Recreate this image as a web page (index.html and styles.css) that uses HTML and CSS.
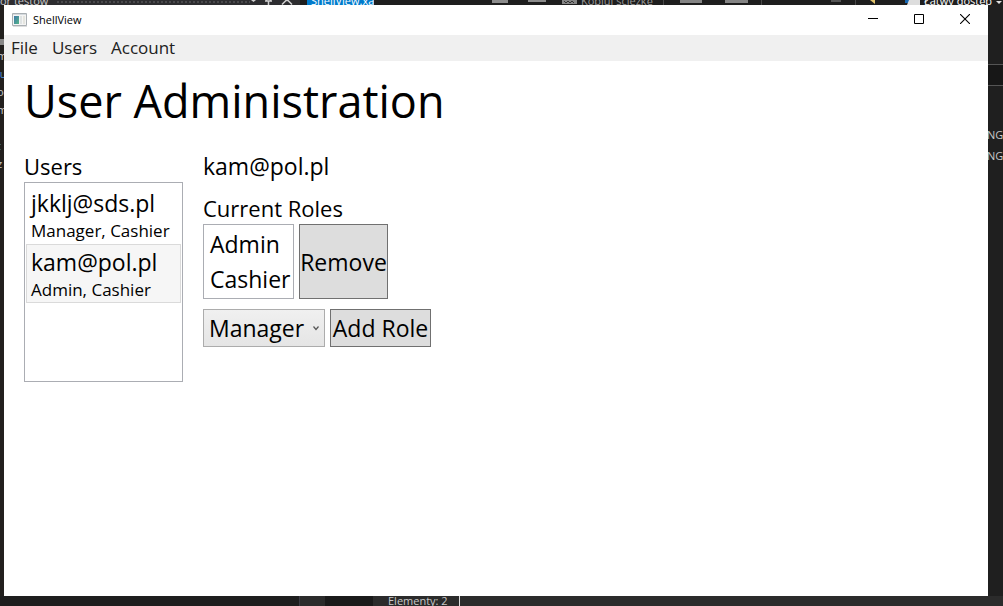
FILE: index.html
```html
<!DOCTYPE html>
<html lang="en">
<head>
<meta charset="utf-8">
<title>ShellView</title>
<link rel="stylesheet" href="styles.css">
</head>
<body class="desktop">
  <div class="strip strip-top" aria-hidden="true">
    <span class="behind behind-search">tor testów</span>
    <span class="dots"></span>
    <svg class="pins" width="50" height="5" viewBox="0 0 50 5"><path d="M1 0h5l-2.500 2z" fill="#d0d0d0"/><path d="M15 1h7M18.500 1v4M16.500 0v1M20.500 0v1M32 4.500l4-4h2l4 4" fill="none" stroke="#d0d0d0" stroke-width="1.500"/></svg>
    <span class="behind behind-tab">ShellView.xa</span>
    <svg class="ribbon" width="175" height="5" viewBox="0 0 175 5"><path d="M118 0h16v3h-16zM154 0h18v2h-18z" fill="#8c8c8c"/></svg>
    <svg class="path-icon" width="18" height="5" viewBox="0 0 18 5"><path d="M0 0h15v4H0z" fill="#858585"/><path d="M2 1l2 2 2-2 2 2 2-2 2 2" fill="none" stroke="#333"/></svg>
    <span class="behind behind-copy">Kopiuj ścieżkę</span>
    <svg class="tools" width="257" height="5" viewBox="0 0 257 5"><path d="M0 0h1v5H0zM98 0h1v5h-1zM192 0h1v5h-1z" fill="#484848"/><path d="M17 0h22v3H17zM62 0h23v3H62z" fill="#858585"/><path d="M168 0h10v2h-10z" fill="#555"/><path d="M207 0h5v4z" fill="#e2c36b"/><path d="M242 0h8v3h-8z" fill="#1768b3"/><path d="M246 0h11v5h-13z" fill="#ddd"/></svg>
    <span class="behind behind-access">Łatwy dostęp</span>
    <svg width="8" height="5" viewBox="0 0 8 5"><path d="M1 1h6L4 4z" fill="#e0e0e0"/></svg>
  </div>
  <div class="strip strip-left" aria-hidden="true">
    <span class="sliver sliver-bar"></span>
    <span class="sliver">m</span>
    <span class="sliver sliver-blue">lu</span>
    <span class="sliver">oc</span>
    <span class="sliver">m</span>
    <span class="sliver"></span>
    <span class="sliver sliver-blue">t</span>
    <span class="sliver">z</span>
  </div>

  <div class="window">
    <header class="titlebar">
      <svg class="app-icon" width="16" height="14" viewBox="0 0 16 14" aria-hidden="true">
        <defs><linearGradient id="pane" x1="0" y1="0" x2="1" y2="1"><stop offset="0" stop-color="#3f78a8"/><stop offset="1" stop-color="#55b58a"/></linearGradient></defs>
        <path d="M.5.500h14v12H.5z" fill="#f4f4f4" stroke="#a9afb3"/>
        <path d="M1 1h13v1H1z" fill="#d5dade"/>
        <path d="M2 3h5v8H2z" fill="url(#pane)"/>
        <path d="M8 3h2v8H8z" fill="#dfe3e3"/>
        <path d="M11 3h2v8h-2z" fill="#e5e5df"/>
        <path d="M1 13.500h14" stroke="#ddd"/>
      </svg>
      <span class="title">ShellView</span>
      <div class="caption-buttons">
        <button class="caption" type="button" aria-label="Minimize"><svg width="10" height="10" viewBox="0 0 10 10"><path d="M0 4.500h10" stroke="#000"/></svg></button>
        <button class="caption" type="button" aria-label="Maximize"><svg width="10" height="10" viewBox="0 0 10 10"><path d="M.5.500h9v9h-9z" fill="none" stroke="#000"/></svg></button>
        <button class="caption" type="button" aria-label="Close"><svg width="10" height="10" viewBox="0 0 10 10"><path d="M0 0l10 10M10 0L0 10" stroke="#000" stroke-width="1.100"/></svg></button>
      </div>
    </header>
    <nav class="menu">
      <button class="menu-item" type="button">File</button>
      <button class="menu-item" type="button">Users</button>
      <button class="menu-item" type="button">Account</button>
    </nav>
    <main class="content">
      <h1 class="heading">User Administration</h1>
      <div class="columns">
        <section class="users">
          <h2 class="label" id="users-label">Users</h2>
          <ul class="listbox user-list" role="listbox" aria-labelledby="users-label">
            <li class="user" role="option" aria-selected="false">
              <span class="email">jkklj@sds.pl</span>
              <span class="user-roles">Manager, Cashier</span>
            </li>
            <li class="user selected" role="option" aria-selected="true">
              <span class="email">kam@pol.pl</span>
              <span class="user-roles">Admin, Cashier</span>
            </li>
          </ul>
        </section>
        <section class="details">
          <p class="label account">kam@pol.pl</p>
          <div class="current">
            <h2 class="label" id="roles-label">Current Roles</h2>
            <div class="row">
              <ul class="listbox role-list" role="listbox" aria-labelledby="roles-label">
                <li class="role" role="option">Admin</li>
                <li class="role" role="option">Cashier</li>
              </ul>
              <button class="button remove" type="button">Remove</button>
            </div>
          </div>
          <div class="row">
            <div class="combo">
              <select class="select" aria-label="Role to add"><option>Manager</option></select>
              <svg class="chevron" width="6" height="5" viewBox="0 0 6 5" aria-hidden="true"><path d="M.5.500L3 3.500 5.500.500" fill="none" stroke="#555" stroke-width="1.200"/></svg>
            </div>
            <button class="button add" type="button">Add Role</button>
          </div>
        </section>
      </div>
    </main>
  </div>

  <div class="strip strip-right" aria-hidden="true">
    <span class="field"></span>
    <span class="code">NG</span>
    <span class="code">NG</span>
  </div>
  <div class="strip strip-bottom" aria-hidden="true">
    <span class="panel"></span>
    <span class="tab"></span>
    <span class="count">Elementy: 2</span>
  </div>
</body>
</html>
```
FILE: styles.css
```css
* { box-sizing: border-box; }

.desktop {
  margin: 0;
  height: 100vh;
  display: grid;
  grid-template: 5px minmax(0, 1fr) 10px / 4px minmax(0, 1fr) 15px;
  overflow: hidden;
  background: #1e1e1e;
  color: #000;
  font-family: "Open Sans", "Noto Sans", sans-serif;
}

.strip {
  display: flex;
  overflow: hidden;
  white-space: nowrap;
  color: #c8c8c8;
  font-size: 11px;
  line-height: 14px;
}

.strip > * { flex: none; }

/* Applications showing behind the window */
.strip-top { grid-column: 1 / -1; }
.behind { height: 14px; margin-top: -6px; }
.behind-search { width: 56px; text-indent: -4px; background: #2d2d30; }
.dots { width: 194px; background: radial-gradient(#4a4a4d 1px, #2d2d30 1px) 0 0 / 4px 4px; }
.pins { background: #2d2d30; }
.behind-tab { width: 67px; margin-left: 7px; padding-left: 4px; background: #007acc; color: #fff; overflow: hidden; }
.path-icon { margin-left: 13px; }
.behind-copy { width: 83px; padding-left: 1px; color: #999; }
.behind-access { width: 75px; padding-left: 4px; color: #fff; }

.strip-left { flex-direction: column; padding-top: 34px; background: #22201e; }
.sliver { height: 18px; margin-left: -3px; }
.sliver-bar { height: 6px; margin-bottom: 4px; background: #888; }
.sliver-blue { color: #4c8fd8; }

.strip-right { flex-direction: column; background: #1f1f1f; }
.field { height: 22px; margin-top: 59px; margin-bottom: 42px; border: solid #555; border-width: 1px 0; background: #171717; }
.code { height: 21px; margin-left: -1px; }

.strip-bottom { grid-column: 1 / -1; background: #2b2b2b; }
.panel { width: 300px; background: #1e1e1e; border-right: 1px solid #3c3c44; }
.tab { width: 48px; margin-left: 25px; background: #1a1a1a; }
.count { margin-top: -2px; margin-left: 15px; padding-right: 11px; border-right: 1px solid #ddd; }

/* Window frame */
.window { display: flex; flex-direction: column; min-width: 0; background: #fff; }

.titlebar { display: flex; align-items: center; height: 30px; padding-left: 8px; }
.title { margin-left: 5px; font-size: 11px; line-height: 16px; }
.caption-buttons { display: flex; align-self: stretch; margin-left: auto; }
.caption {
  display: flex;
  align-items: center;
  justify-content: center;
  width: 46px;
  padding: 0 0 2px;
  border: 0;
  background: none;
}

.menu { display: flex; height: 26px; background: #f0f0f0; }
.menu-item {
  padding: 0 7px;
  border: 0;
  background: none;
  color: #212121;
  font: 17px/26px "Open Sans", "Noto Sans", sans-serif;
}

/* User administration view */
.content { padding: 8px 20px 20px; }
.heading { margin: 0; font-size: 45px; font-weight: 400; line-height: 64px; }
.columns { display: flex; gap: 20px; margin-top: 17px; }
.label { margin: 0; font-size: 22px; font-weight: 400; line-height: 32px; }
.account { font-size: 23px; }

.listbox { margin: 0; border: 1px solid #abadb3; background: #fff; list-style: none; }
.user-list { width: 159px; height: 200px; padding: 2px 1px; }
.user { display: flex; flex-direction: column; height: 59px; padding-left: 4px; border: 1px solid transparent; }
.selected { border-color: #dadada; background: #f6f6f6; }
.email { font-size: 23px; line-height: 34px; }
.user-roles { font-size: 17px; line-height: 22px; white-space: nowrap; }

.details { display: flex; flex-direction: column; gap: 10px; }
.row { display: flex; gap: 5px; }
.role-list { width: 91px; height: 75px; padding: 2px 6px; }
.role { font-size: 23px; line-height: 35px; }

.button {
  padding: 0;
  border: 1px solid #707070;
  background: #ddd;
  color: #000;
  font: 23px/34px "Open Sans", "Noto Sans", sans-serif;
}
.remove { width: 89px; }
.add { width: 101px; }

.combo { display: grid; align-items: center; width: 122px; height: 38px; }
.select {
  grid-area: 1 / 1;
  width: 100%;
  height: 100%;
  padding: 0 0 0 5px;
  appearance: none;
  border: 1px solid #acacac;
  border-radius: 0;
  background: linear-gradient(#f0f0f0, #e5e5e5);
  color: #000;
  font: 23px/34px "Open Sans", "Noto Sans", sans-serif;
}
.chevron { grid-area: 1 / 1; justify-self: end; margin-right: 6px; pointer-events: none; }
```
